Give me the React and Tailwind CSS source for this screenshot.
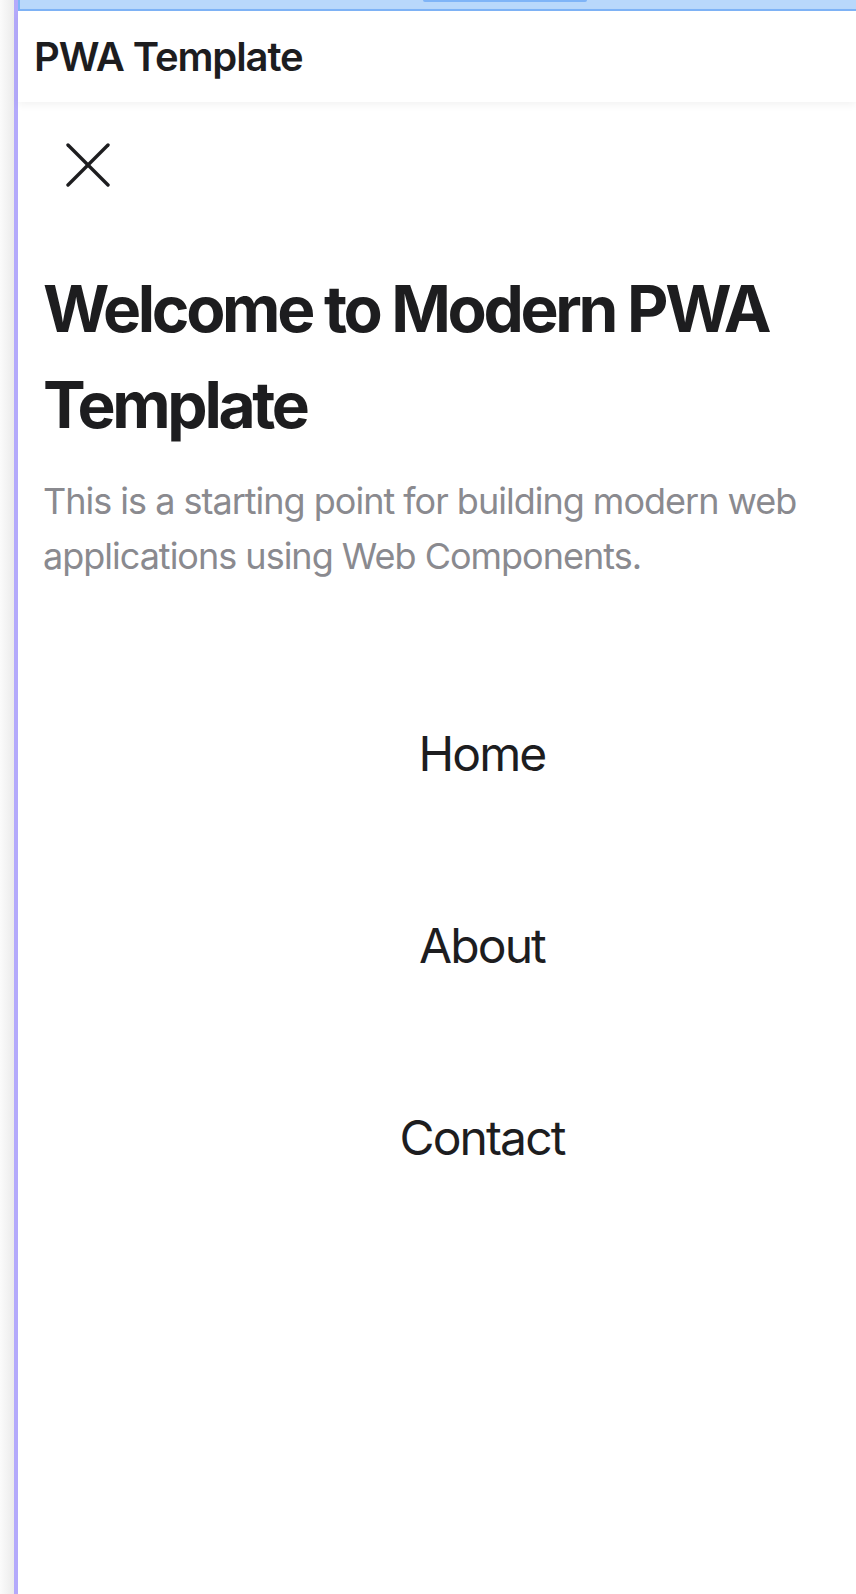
import React from 'react';

const navLinks = ['Home', 'About', 'Contact'];

const CloseIcon = () => (
  <svg width="44" height="44" viewBox="0 0 44 44" fill="none" stroke="#1d1d1f" strokeWidth="3.4" strokeLinecap="round">
    <line x1="2" y1="2" x2="42" y2="42" />
    <line x1="42" y1="2" x2="2" y2="42" />
  </svg>
);

const App = () => {
  return (
    <div className="flex w-[856px] h-[1594px] overflow-hidden bg-white font-['Inter','Noto_Sans',sans-serif]">
      {/* left edge shadow + accent */}
      <div className="w-[14px] shrink-0 bg-gradient-to-r from-[#fbfbfb] to-[#ebebeb]" />
      <div className="w-[4px] shrink-0 bg-[#b4aafb]" />

      <div className="flex-1 flex flex-col min-w-0">
        <div className="relative h-[11px] shrink-0 bg-[#b9d8fb] border-b-2 border-l-2 border-[#7fb4f7]">
          <div className="absolute left-[403px] top-0 w-[164px] h-[2px] rounded-b bg-[#7fb4f7]" />
        </div>

        <header className="h-[91px] shrink-0 flex items-center pl-4 bg-white shadow-[0_3px_8px_rgba(0,0,0,0.05)] relative z-10">
          <h1 className="text-[40px] font-semibold text-[#1d1d1f] tracking-[-1.1px]">PWA Template</h1>
        </header>

        <main className="flex-1 flex flex-col">
          <button className="ml-[48px] mt-[41px] w-[44px] h-[44px]">
            <CloseIcon />
          </button>

          <section className="px-[25px] mt-[74px]">
            <h2 className="text-[64px] leading-[96px] font-bold text-[#1d1d1f] tracking-[-3.3px]">
              Welcome to Modern PWA Template
            </h2>
            <p className="mt-[21px] text-[36px] leading-[55px] text-[#8a8a8f] tracking-[-1px]">
              This is a starting point for building modern web applications using Web Components.
            </p>
          </section>

          <nav className="mt-[74px] pl-[90px] flex flex-col">
            {navLinks.map((link) => (
              <a
                key={link}
                href="#"
                className="h-[192px] flex items-center justify-center text-[48px] leading-none text-[#1d1d1f] tracking-[-1.9px]"
              >
                {link}
              </a>
            ))}
          </nav>
        </main>
      </div>
    </div>
  );
};

export default App;
